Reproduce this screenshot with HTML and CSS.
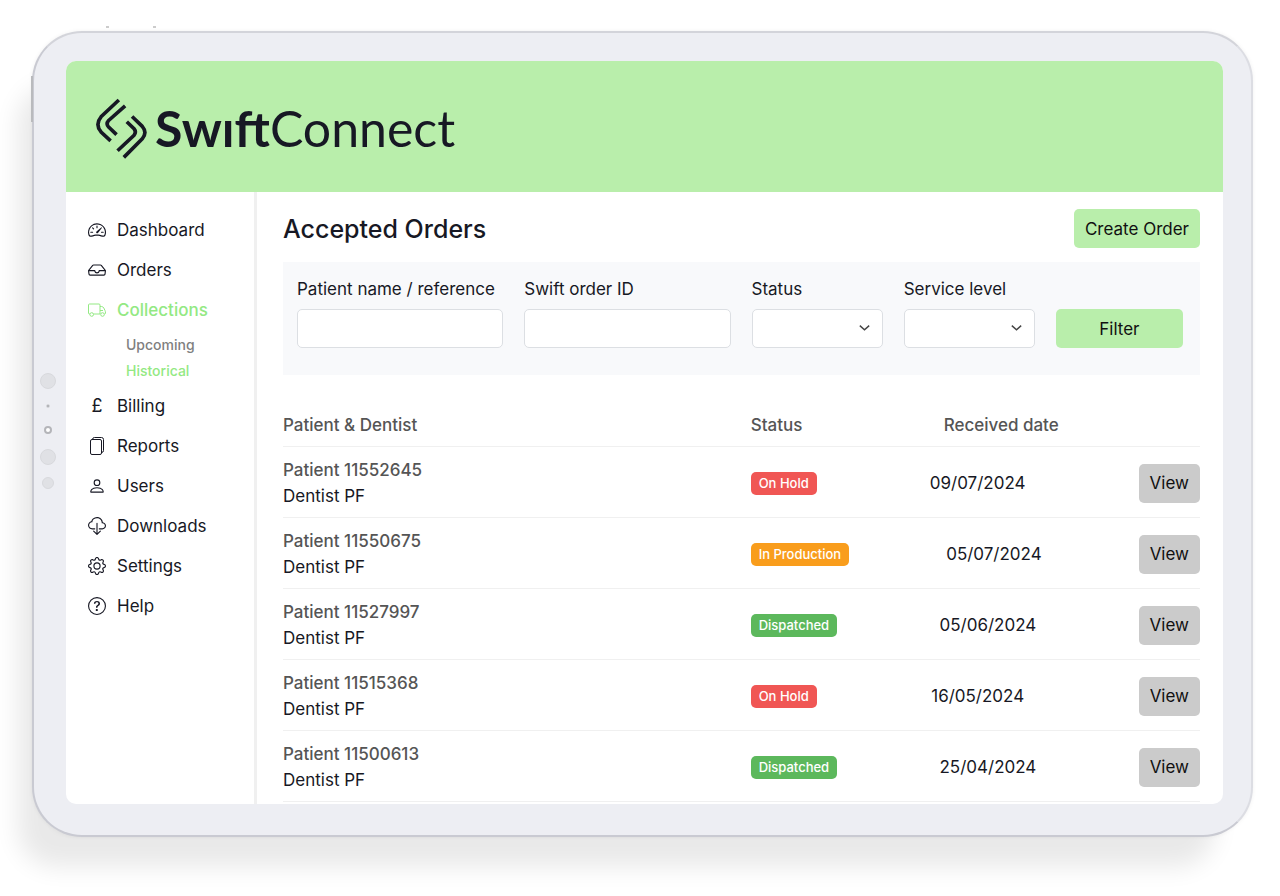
FILE: index.html
```html
<!DOCTYPE html>
<html lang="en">
<head>
    <meta charset="UTF-8">
    <meta name="viewport" content="width=device-width, initial-scale=1.0">
    <title>SwiftConnect - Accepted Orders</title>
    <link rel="stylesheet" href="styles.css">
</head>
<body>
    <div class="tablet">
        <span class="power-button"></span>
        <span class="volume-button"></span>
        <div class="sensors">
            <span class="sensor large"></span>
            <span class="sensor dot"></span>
            <span class="sensor ring"></span>
            <span class="sensor large"></span>
            <span class="sensor"></span>
        </div>

        <div class="screen">
            <header class="topbar">
                <a class="logo" href="#" aria-label="SwiftConnect">
                    <svg viewBox="45 55 160 185" fill="none" stroke="currentColor" stroke-width="11">
                        <path d="M117 61 63 112Q44 135 63 158L92 185"/>
                        <path d="M136 79 86 123Q77 133 86 143L110 166"/>
                        <path d="M157 111 188 141Q204 160 188 179L132 235"/>
                        <path d="M141 127 163 148Q171 158 163 168L113 215"/>
                    </svg>
                    <span><b>Swıft</b>Connect</span>
                </a>
            </header>

            <div class="layout">
                <nav class="sidebar">
                    <a href="#">
                        <svg viewBox="0 0 16 16"><path d="M8 4a.5.5 0 0 1 .5.5V6a.5.5 0 0 1-1 0V4.5A.5.5 0 0 1 8 4M3.732 5.732a.5.5 0 0 1 .707 0l.915.914a.5.5 0 1 1-.708.708l-.914-.915a.5.5 0 0 1 0-.707M2 10a.5.5 0 0 1 .5-.5h1.586a.5.5 0 0 1 0 1H2.5A.5.5 0 0 1 2 10m9.5 0a.5.5 0 0 1 .5-.5h1.5a.5.5 0 0 1 0 1H12a.5.5 0 0 1-.5-.5m.754-4.246a.39.39 0 0 0-.527-.02L7.547 9.31a.91.91 0 1 0 1.302 1.258l3.434-4.297a.39.39 0 0 0-.029-.518z"/><path fill-rule="evenodd" d="M0 10a8 8 0 1 1 15.547 2.661c-.442 1.253-1.845 1.602-2.932 1.25C11.309 13.488 9.475 13 8 13c-1.474 0-3.31.488-4.615.911-1.087.352-2.49.003-2.932-1.25A8 8 0 0 1 0 10m8-7a7 7 0 0 0-6.603 9.329c.203.575.923.876 1.68.63C4.397 12.533 6.358 12 8 12s3.604.532 4.923.96c.757.245 1.477-.056 1.68-.631A7 7 0 0 0 8 3"/></svg>
                        Dashboard
                    </a>
                    <a href="#">
                        <svg viewBox="0 0 16 16"><path d="M4.98 4a.5.5 0 0 0-.39.188L1.54 8H6a.5.5 0 0 1 .5.5 1.5 1.5 0 1 0 3 0A.5.5 0 0 1 10 8h4.46l-3.05-3.812A.5.5 0 0 0 11.02 4zm9.954 5H10.45a2.5 2.5 0 0 1-4.9 0H1.066l.32 2.562a.5.5 0 0 0 .497.438h12.234a.5.5 0 0 0 .496-.438zM3.809 3.563A1.5 1.5 0 0 1 4.981 3h6.038a1.5 1.5 0 0 1 1.172.563l3.7 4.625a.5.5 0 0 1 .105.374l-.39 3.124A1.5 1.5 0 0 1 14.117 13H1.883a1.5 1.5 0 0 1-1.489-1.314l-.39-3.124a.5.5 0 0 1 .106-.374z"/></svg>
                        Orders
                    </a>
                    <a href="#" class="active">
                        <svg viewBox="0 0 18 18" class="line"><path d="M2 13H1.5Q.5 13 .5 12V4Q.5 3 1.5 3H11Q12 3 12 4V13H5.5M12 5.5H13.5Q15 5.5 15.8 7L17 9.500Q17.5 10.5 17.5 12Q17.5 13 16.500 13M12 9.5H15"/><circle cx="3.7" cy="13.5" r="1.8"/><circle cx="14.5" cy="13.5" r="1.8"/></svg>
                        Collections
                    </a>
                    <div class="submenu">
                        <a href="#">Upcoming</a>
                        <a href="#" class="active">Historical</a>
                    </div>
                    <a href="#">
                        <span class="pound">£</span>
                        Billing
                    </a>
                    <a href="#">
                        <svg viewBox="0 0 18 18" class="line"><rect x="2.5" y="2.5" width="11" height="15" rx="1.5"/><path d="M4.500 2.500Q4.500.5 6.500.5H13.500Q15.500.5 15.500 2.500V13.500Q15.500 15.500 13.500 15.500"/></svg>
                        Reports
                    </a>
                    <a href="#">
                        <svg viewBox="0 0 16 16"><path d="M8 8a3 3 0 1 0 0-6 3 3 0 0 0 0 6m2-3a2 2 0 1 1-4 0 2 2 0 0 1 4 0m4 8c0 1-1 1-1 1H3s-1 0-1-1 1-4 6-4 6 3 6 4m-1-.004c-.001-.246-.154-.986-.832-1.664C11.516 10.68 10.289 10 8 10s-3.516.68-4.168 1.332c-.678.678-.83 1.418-.832 1.664z"/></svg>
                        Users
                    </a>
                    <a href="#">
                        <svg viewBox="0 0 16 16"><path d="M4.406 1.342A5.53 5.53 0 0 1 8 0c2.69 0 4.923 2 5.166 4.579C14.758 4.804 16 6.137 16 7.773 16 9.569 14.502 11 12.687 11H10a.5.5 0 0 1 0-1h2.688C13.979 10 15 8.988 15 7.773c0-1.216-1.02-2.228-2.313-2.228h-.5v-.5C12.188 2.825 10.328 1 8 1a4.53 4.53 0 0 0-2.941 1.1c-.757.652-1.153 1.438-1.153 2.055v.448l-.445.049C2.064 4.805 1 5.952 1 7.318 1 8.785 2.23 10 3.781 10H6a.5.5 0 0 1 0 1H3.781C1.708 11 0 9.366 0 7.318c0-1.763 1.266-3.223 2.942-3.593.143-.863.698-1.723 1.464-2.383"/><path d="M7.646 15.854a.5.5 0 0 0 .708 0l3-3a.5.5 0 0 0-.708-.708L8.5 14.293V5.5a.5.5 0 0 0-1 0v8.793l-2.146-2.147a.5.5 0 0 0-.708.708z"/></svg>
                        Downloads
                    </a>
                    <a href="#">
                        <svg viewBox="0 0 16 16"><path d="M8 4.754a3.246 3.246 0 1 0 0 6.492 3.246 3.246 0 0 0 0-6.492M5.754 8a2.246 2.246 0 1 1 4.492 0 2.246 2.246 0 0 1-4.492 0"/><path d="M9.796 1.343c-.527-1.79-3.065-1.79-3.592 0l-.094.319a.873.873 0 0 1-1.255.52l-.292-.16c-1.64-.892-3.433.902-2.54 2.541l.159.292a.873.873 0 0 1-.52 1.255l-.319.094c-1.79.527-1.79 3.065 0 3.592l.319.094a.873.873 0 0 1 .52 1.255l-.16.292c-.892 1.64.901 3.434 2.541 2.54l.292-.159a.873.873 0 0 1 1.255.52l.094.319c.527 1.79 3.065 1.79 3.592 0l.094-.319a.873.873 0 0 1 1.255-.52l.292.16c1.64.893 3.434-.902 2.54-2.541l-.159-.292a.873.873 0 0 1 .52-1.255l.319-.094c1.79-.527 1.79-3.065 0-3.592l-.319-.094a.873.873 0 0 1-.52-1.255l.16-.292c.893-1.64-.902-3.433-2.541-2.54l-.292.159a.873.873 0 0 1-1.255-.52zm-2.633.283c.246-.835 1.428-.835 1.674 0l.094.319a1.873 1.873 0 0 0 2.693 1.115l.291-.16c.764-.415 1.6.42 1.184 1.185l-.159.292a1.873 1.873 0 0 0 1.116 2.692l.318.094c.835.246.835 1.428 0 1.674l-.319.094a1.873 1.873 0 0 0-1.115 2.693l.16.291c.415.764-.42 1.6-1.185 1.184l-.291-.159a1.873 1.873 0 0 0-2.693 1.116l-.094.318c-.246.835-1.428.835-1.674 0l-.094-.319a1.873 1.873 0 0 0-2.692-1.115l-.292.16c-.764.415-1.6-.42-1.184-1.185l.159-.291A1.873 1.873 0 0 0 1.945 8.93l-.319-.094c-.835-.246-.835-1.428 0-1.674l.319-.094A1.873 1.873 0 0 0 3.06 4.377l-.16-.292c-.415-.764.42-1.6 1.185-1.184l.292.159a1.873 1.873 0 0 0 2.692-1.115z"/></svg>
                        Settings
                    </a>
                    <a href="#">
                        <svg viewBox="0 0 16 16"><path d="M8 15A7 7 0 1 1 8 1a7 7 0 0 1 0 14m0 1A8 8 0 1 0 8 0a8 8 0 0 0 0 16"/><path d="M5.255 5.786a.237.237 0 0 0 .241.247h.825c.138 0 .248-.113.266-.25.09-.656.54-1.134 1.342-1.134.686 0 1.314.343 1.314 1.168 0 .635-.374.927-.965 1.371-.673.489-1.206 1.06-1.168 1.987l.003.217a.25.25 0 0 0 .25.246h.811a.25.25 0 0 0 .25-.25v-.105c0-.718.273-.927 1.01-1.486.609-.463 1.244-.977 1.244-2.056 0-1.511-1.276-2.241-2.673-2.241-1.267 0-2.655.59-2.75 2.286m1.557 5.763c0 .533.425.927 1.01.927.609 0 1.028-.394 1.028-.927 0-.552-.42-.94-1.029-.94-.584 0-1.009.388-1.009.94"/></svg>
                        Help
                    </a>
                </nav>

                <main>
                    <div class="title-row">
                        <h1>Accepted Orders</h1>
                        <button class="btn">Create Order</button>
                    </div>

                    <form class="filters">
                        <div class="field">
                            <label for="patient">Patient name / reference</label>
                            <input type="text" id="patient">
                        </div>
                        <div class="field">
                            <label for="orderId">Swift order ID</label>
                            <input type="text" id="orderId">
                        </div>
                        <div class="field">
                            <label for="status">Status</label>
                            <div class="select">
                                <select id="status"><option></option></select>
                                <svg viewBox="0 0 16 16" class="line"><path d="M3 6 8 10.5 13 6"/></svg>
                            </div>
                        </div>
                        <div class="field">
                            <label for="service">Service level</label>
                            <div class="select">
                                <select id="service"><option></option></select>
                                <svg viewBox="0 0 16 16" class="line"><path d="M3 6 8 10.5 13 6"/></svg>
                            </div>
                        </div>
                        <button type="button" class="btn">Filter</button>
                    </form>

                    <table class="orders">
                        <thead>
                            <tr>
                                <th>Patient &amp; Dentist</th>
                                <th>Status</th>
                                <th>Received date</th>
                                <th></th>
                            </tr>
                        </thead>
                        <tbody>
                            <tr>
                                <td><strong>Patient 11552645</strong><br>Dentist PF</td>
                                <td><span class="badge hold">On Hold</span></td>
                                <td>09/07/2024</td>
                                <td><button class="btn view">View</button></td>
                            </tr>
                            <tr>
                                <td><strong>Patient 11550675</strong><br>Dentist PF</td>
                                <td><span class="badge production">In Production</span></td>
                                <td>05/07/2024</td>
                                <td><button class="btn view">View</button></td>
                            </tr>
                            <tr>
                                <td><strong>Patient 11527997</strong><br>Dentist PF</td>
                                <td><span class="badge dispatched">Dispatched</span></td>
                                <td>05/06/2024</td>
                                <td><button class="btn view">View</button></td>
                            </tr>
                            <tr>
                                <td><strong>Patient 11515368</strong><br>Dentist PF</td>
                                <td><span class="badge hold">On Hold</span></td>
                                <td>16/05/2024</td>
                                <td><button class="btn view">View</button></td>
                            </tr>
                            <tr>
                                <td><strong>Patient 11500613</strong><br>Dentist PF</td>
                                <td><span class="badge dispatched">Dispatched</span></td>
                                <td>25/04/2024</td>
                                <td><button class="btn view">View</button></td>
                            </tr>
                        </tbody>
                    </table>
                </main>
            </div>
        </div>
    </div>
</body>
</html>
```
FILE: styles.css
```css
* {
    box-sizing: border-box;
}
body {
    margin: 0;
    padding: 31px 27px 59px 32px;
    background-color: #fff;
    color: #171824;
    font-family: Inter, "Liberation Sans", sans-serif;
    font-size: 17px;
    line-height: 26px;
}
a {
    color: inherit;
    text-decoration: none;
}

/* Tablet frame */
.tablet {
    position: relative;
    padding: 28px 28px 31px 32px;
    border: 2px solid #c9cad2;
    border-top-color: #d3d4da;
    border-right-color: #dcdde3;
    border-radius: 50px;
    background-color: #edeef3;
    box-shadow: -26px 42px 24px -12px rgba(0,0,0,0.09), 0 0 4px rgba(0,0,0,0.06);
}
.power-button {
    position: absolute;
    left: -3px;
    top: 43px;
    width: 2px;
    height: 46px;
    background-color: #b9babd;
}
.volume-button {
    position: absolute;
    left: 72px;
    top: -7px;
    width: 50px;
    height: 2px;
    border: solid #ccc;
    border-width: 0 3px;
}
.sensors {
    position: absolute;
    left: 6px;
    top: 340px;
    width: 16px;
    display: flex;
    flex-direction: column;
    align-items: center;
    gap: 12px;
}
.sensor {
    width: 12px;
    height: 12px;
    border-radius: 50%;
    background-color: #e0e1e5;
    border: 1px solid #d8d9dd;
}
.sensor.large {
    width: 16px;
    height: 16px;
}
.sensor.dot {
    width: 4px;
    height: 4px;
    margin: 3px 0;
    background-color: #a5a6aa;
}
.sensor.ring {
    width: 8px;
    height: 8px;
    margin: 3px 0;
    border: 2px solid #b4b5b9;
    background-color: #fff;
}
.screen {
    overflow: hidden;
    border-radius: 10px;
    background-color: #fff;
}

/* Header */
.topbar {
    display: flex;
    padding: 37px 29px 33px;
    background-color: #b9eeab;
}
.logo {
    display: flex;
    align-items: center;
    gap: 7px;
    font-family: Lato, sans-serif;
    font-size: 50px;
    line-height: 61px;
}
.logo svg {
    width: 53px;
    height: 61px;
}

/* Sidebar */
.layout {
    display: flex;
}
.sidebar {
    flex: 0 0 191px;
    padding: 18px 0 0 22px;
    border-right: 3px solid #f0f0f0;
}
.sidebar > a {
    display: flex;
    align-items: center;
    gap: 11px;
    height: 40px;
}
.sidebar svg {
    width: 18px;
    height: 18px;
    fill: currentColor;
}
.sidebar svg.line, .select svg {
    fill: none;
    stroke: currentColor;
}
.pound {
    width: 18px;
    font-size: 18px;
    text-align: center;
}
.sidebar a.active {
    color: #93e983;
    font-weight: 500;
}
.submenu {
    padding: 2px 0 2px 38px;
    font-size: 14px;
    font-weight: 500;
    color: #808080;
}
.submenu a {
    display: block;
}

/* Content */
main {
    flex: 1;
    min-width: 0;
    padding: 17px 23px 2px 26px;
}
.title-row {
    display: flex;
    justify-content: space-between;
    align-items: center;
    margin-bottom: 14px;
}
h1 {
    margin: 0;
    font-size: 25px;
    font-weight: 500;
}
.btn {
    height: 39px;
    padding: 0 11px;
    border: none;
    border-radius: 5px;
    background-color: #b9eeab;
    color: #111;
    font: inherit;
    cursor: pointer;
}
.filters {
    display: grid;
    grid-template-columns: 206fr 206fr 131fr 131fr 127fr;
    gap: 21px;
    align-items: end;
    padding: 14px 17px 27px 14px;
    background-color: #f8f9fb;
}
.field label {
    display: block;
    margin-bottom: 7px;
    white-space: nowrap;
}
.field input, .field select {
    display: block;
    width: 100%;
    height: 39px;
    padding: 0 10px;
    border: 1px solid #dcdfe3;
    border-radius: 5px;
    background-color: #fff;
    font: inherit;
    appearance: none;
}
.select {
    position: relative;
}
.select svg {
    position: absolute;
    right: 11px;
    top: 11px;
    width: 15px;
    height: 15px;
    stroke-width: 1.5;
    color: #444;
    pointer-events: none;
}

/* Orders list, the date floats midway between the badge and the button */
.orders {
    display: block;
    margin-top: 29px;
}
.orders thead, .orders tbody {
    display: block;
}
.orders tr {
    display: flex;
    align-items: center;
    padding: 10px 0 8px;
    border-bottom: 1px solid #f0f0f0;
}
.orders thead tr {
    padding: 8px 0;
}
.orders th, .orders td {
    padding: 0;
    text-align: left;
}
.orders th, .orders strong {
    font-weight: 500;
    color: #555;
}
.orders tr > :first-child {
    flex: 0 0 51%;
}
.orders tr > :nth-child(2), .orders tr > :nth-child(3) {
    margin-right: auto;
}
.badge {
    display: block;
    padding: 0 8px;
    border-radius: 5px;
    color: #fff;
    font-size: 13px;
    font-weight: 500;
    line-height: 23px;
}
.hold {
    background-color: #f05654;
}
.production {
    background-color: #f99d1c;
}
.dispatched {
    background-color: #5cb85c;
}
.view {
    background-color: #cbcbcb;
}
```
